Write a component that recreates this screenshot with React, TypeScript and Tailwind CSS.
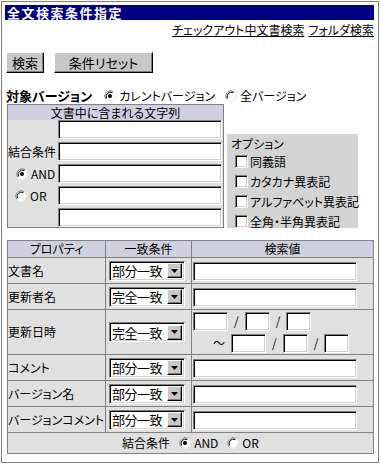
import React from 'react';

const inset =
  'bg-white border border-t-[#808080] border-l-[#808080] border-b-white border-r-white shadow-[inset_1px_1px_0_#000,inset_-1px_-1px_0_#d4d0c8]';

const btn =
  'bg-[#c8c8c8] border border-t-white border-l-white border-b-black border-r-black shadow-[inset_-1px_-1px_0_#808080] text-[13px] leading-none';

function Radio({ checked }: { checked?: boolean }) {
  return (
    <svg width="12" height="12" viewBox="0 0 12 12" className="shrink-0">
      <circle cx="6" cy="6" r="5.5" fill="#fff" />
      <path d="M1.6 9.2A5.5 5.5 0 0 1 9.2 1.6" stroke="#808080" strokeWidth="1" fill="none" />
      <path d="M2.6 8.4A4.3 4.3 0 0 1 8.4 2.6" stroke="#000" strokeWidth="1" fill="none" />
      <path d="M2.8 10.4A5.5 5.5 0 0 0 10.4 2.8" stroke="#e8e8e8" strokeWidth="1" fill="none" />
      {checked && <circle cx="6" cy="6" r="2" fill="#000" />}
    </svg>
  );
}

function Check() {
  return <span className={`${inset} inline-block w-[13px] h-[13px] shrink-0`} />;
}

function Select({ value }: { value: string }) {
  return (
    <div className={`${inset} flex items-center w-[76px] h-[20px] pl-[2px] pr-[2px]`}>
      <span className="flex-1 text-[13px] leading-none whitespace-nowrap tracking-[-0.5px]">{value}</span>
      <span className={`${btn} w-[15px] h-[15px] shrink-0 flex items-center justify-center`}>
        <svg width="7" height="4" viewBox="0 0 7 4">
          <path d="M0 0h7L3.5 4z" fill="#000" />
        </svg>
      </span>
    </div>
  );
}

function Box({ w }: { w: string }) {
  return <span className={`${inset} inline-block h-[19px] align-middle ${w}`} />;
}

const rows = [
  { label: '文書名', match: '部分一致' },
  { label: '更新者名', match: '完全一致' },
];
const rows2 = [
  { label: 'コメント', match: '部分一致' },
  { label: 'バージョン名', match: '部分一致' },
  { label: 'バージョンコメント', match: '部分一致' },
];

export default function App() {
  const cell = 'border border-[#808080] bg-[#e0e0e0]';
  return (
    <div className="w-[382px] h-[467px] bg-white text-black font-['Noto_Sans_CJK_JP','Liberation_Sans',sans-serif] text-[12px] [font-feature-settings:'palt']">
      <div className="ml-px mt-px w-[378px] h-[462px] border border-[#808080] pl-[3px] pr-[4px] pt-[3px]">
        <div className="h-[15px] bg-[#000080] text-white font-bold text-[13px] leading-[15px] pl-[2px] tracking-[1.5px]">
          全文検索条件指定
        </div>
        <div className="flex justify-end gap-[4px] mt-[2px] leading-[15px]">
          <span className="underline">チェックアウト中文書検索</span>
          <span className="underline">フォルダ検索</span>
        </div>

        <div className="flex gap-[10px] mt-[15px] ml-px">
          <button className={`${btn} w-[38px] h-[21px]`}>検索</button>
          <button className={`${btn} w-[99px] h-[21px]`}>条件リセット</button>
        </div>

        <div className="flex items-center mt-[15px] ml-px h-[15px]">
          <span className="font-bold text-[13px]">対象バージョン</span>
          <span className="ml-[12px] flex items-center gap-[3px]">
            <Radio checked />
            カレントバージョン
          </span>
          <span className="ml-[10px] flex items-center gap-[3px]">
            <Radio />
            全バージョン
          </span>
        </div>

        <div className="flex items-end mt-px ml-[2px]">
          <div className="w-[217px] border border-[#808080] bg-[#e0e0e0]">
            <div className="h-[15px] bg-[#d0d0e0] text-center leading-[15px]">文書中に含まれる文字列</div>
            <div className="grid grid-cols-[50px_1fr] gap-y-[3px] pr-px">
              <span />
              <Box w="w-[164px]" />
              <span className="flex items-center">結合条件</span>
              <Box w="w-[164px]" />
              <span className="flex items-center gap-[3px] pl-[8px]">
                <Radio checked />
                AND
              </span>
              <Box w="w-[164px]" />
              <span className="flex items-center gap-[3px] pl-[7px]">
                <Radio />
                OR
              </span>
              <Box w="w-[164px]" />
              <span />
              <Box w="w-[164px]" />
            </div>
          </div>
          <div className="ml-[3px] w-[131px] h-[94px] bg-[#d4d4d4] pl-[4px] pt-[2px] whitespace-nowrap">
            <div className="leading-[16px]">オプション</div>
            <div className="flex flex-col gap-[7px] pl-[4px] mt-[3px]">
              {['同義語', 'カタカナ異表記', 'アルファベット異表記', '全角・半角異表記'].map((t) => (
                <div key={t} className="flex items-center gap-[2px] h-[13px]">
                  <Check />
                  {t}
                </div>
              ))}
            </div>
          </div>
        </div>

        <table className="mt-[12px] ml-[2px] w-[367px] table-fixed border-collapse border border-[#808080]">
          <colgroup>
            <col className="w-[98px]" />
            <col className="w-[86px]" />
            <col />
          </colgroup>
          <thead>
            <tr className="h-[17px] bg-[#d0d0e0] leading-none">
              <th className="border border-[#808080] font-normal">プロパティ</th>
              <th className="border border-[#808080] font-normal">一致条件</th>
              <th className="border border-[#808080] font-normal">検索値</th>
            </tr>
          </thead>
          <tbody>
            {rows.map((r) => (
              <tr key={r.label} className="h-[26px]">
                <td className={cell}>{r.label}</td>
                <td className={`${cell} pl-[3px]`}>
                  <Select value={r.match} />
                </td>
                <td className={`${cell} pl-px`}>
                  <Box w="w-[164px]" />
                </td>
              </tr>
            ))}
            <tr className="h-[45px]">
              <td className={cell}>更新日時</td>
              <td className={`${cell} pl-[3px]`}>
                <Select value="完全一致" />
              </td>
              <td className={`${cell} pl-px`}>
                <div className="flex items-center gap-[6px]">
                  <Box w="w-[35px]" />
                  <span>/</span>
                  <Box w="w-[25px]" />
                  <span>/</span>
                  <Box w="w-[25px]" />
                </div>
                <div className="flex items-center gap-[6px] mt-[3px] pl-[20px]">
                  <span>～</span>
                  <Box w="w-[35px]" />
                  <span>/</span>
                  <Box w="w-[25px]" />
                  <span>/</span>
                  <Box w="w-[25px]" />
                </div>
              </td>
            </tr>
            {rows2.map((r) => (
              <tr key={r.label} className="h-[26px]">
                <td className={`${cell} whitespace-nowrap`}>{r.label}</td>
                <td className={`${cell} pl-[3px]`}>
                  <Select value={r.match} />
                </td>
                <td className={`${cell} pl-px`}>
                  <Box w="w-[164px]" />
                </td>
              </tr>
            ))}
            <tr className="h-[21px]">
              <td colSpan={3} className="bg-[#e0e0e0] border-t border-[#808080]">
                <div className="flex items-center justify-center gap-[3px]">
                  <span className="mr-[6px]">結合条件</span>
                  <Radio checked />
                  <span className="mr-[6px]">AND</span>
                  <Radio />
                  <span>OR</span>
                </div>
              </td>
            </tr>
          </tbody>
        </table>
      </div>
    </div>
  );
}
